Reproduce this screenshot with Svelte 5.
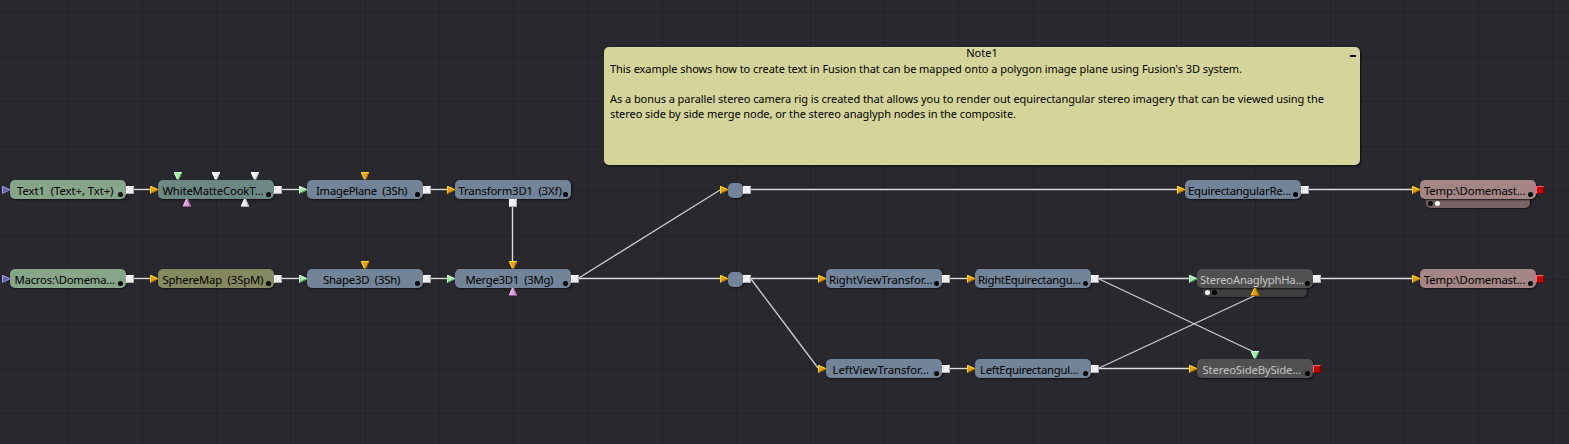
<script>
  const gridX = [68, 142, 216, 290, 365, 439, 513, 587, 662, 736, 810, 884, 958, 1033, 1107, 1181, 1255, 1330, 1404, 1478, 1552];
  const gridY = [12, 57, 101, 146, 190, 235, 279, 324, 369, 413];

  // ports: [direction, colour, x, y] measured from the node's top-left corner
  const nodes = [
    { x: 10, y: 180, tone: 'green', label: 'Text1  (Text+, Txt+)', w: 96.5, tx: 7, input: 'blue', out: 'white' },
    { x: 158, y: 180, tone: 'teal', label: 'WhiteMatteCookT...', w: 101, tx: 4.5, input: 'gold', out: 'white',
      ports: [['down', 'mint', 16, -8], ['down', 'white', 54, -8], ['down', 'white', 93, -8], ['up', 'pink', 25, 19], ['up', 'white', 83, 19]] },
    { x: 307, y: 180, tone: 'blue', label: 'ImagePlane  (3Sh)', w: 91.5, tx: 9, input: 'mint', out: 'white', ports: [['down', 'gold', 54, -8]] },
    { x: 455, y: 180, tone: 'blue', label: 'Transform3D1  (3Xf)', w: 103.5, tx: 3.5, input: 'gold' },
    { x: 10, y: 269, tone: 'green', label: 'Macros:\\Domema...', w: 100.5, tx: 4.5, input: 'blue', out: 'white' },
    { x: 158, y: 269, tone: 'olive', label: 'SphereMap  (3SpM)', w: 101, tx: 4.5, input: 'gold', out: 'white' },
    { x: 307, y: 269, tone: 'blue', label: 'Shape3D  (3Sh)', w: 77.5, tx: 16, input: 'mint', out: 'white', ports: [['down', 'gold', 54, -8]] },
    { x: 455, y: 269, tone: 'blue', label: 'Merge3D1  (3Mg)', w: 88, tx: 10.5, input: 'mint', out: 'white', ports: [['down', 'gold', 54, -8], ['up', 'pink', 54, 19]] },
    { x: 826, y: 269, tone: 'blue', label: 'RightViewTransfor...', w: 103.5, tx: 3, input: 'gold', out: 'white' },
    { x: 826, y: 359, tone: 'blue', label: 'LeftViewTransfor...', w: 96.5, tx: 6.5, input: 'gold', out: 'white' },
    { x: 975, y: 269, tone: 'blue', label: 'RightEquirectangu...', w: 103, tx: 3, input: 'gold', out: 'white' },
    { x: 975, y: 359, tone: 'blue', label: 'LeftEquirectangul...', w: 98.5, tx: 5, input: 'gold', out: 'white' },
    { x: 1185, y: 180, tone: 'blue', label: 'EquirectangularRe...', w: 103, tx: 3, input: 'gold', out: 'white' },
    { x: 1197, y: 269, tone: 'gray', label: 'StereoAnaglyphHa...', w: 104, tx: 3, input: 'mint', out: 'white', view: 'left', ports: [['up', 'gold', 54, 19]] },
    { x: 1197, y: 359, tone: 'gray', label: 'StereoSideBySide...', w: 98.5, tx: 5.5, input: 'gold', out: 'red', ports: [['down', 'mint', 54, -8]] },
    { x: 1420, y: 180, tone: 'rose', label: 'Temp:\\Domemast...', w: 101.5, tx: 4, input: 'gold', out: 'red', view: 'right' },
    { x: 1420, y: 269, tone: 'rose', label: 'Temp:\\Domemast...', w: 101.5, tx: 4, input: 'gold', out: 'red' },
    { x: 728, y: 183, tone: 'blue', dot: true, input: 'gold', out: 'white' },
    { x: 728, y: 272, tone: 'blue', dot: true, input: 'gold', out: 'white' },
  ];

  const wires = [
    [133, 189.5, 151, 189.5], [281, 189.5, 300, 189.5], [430, 189.5, 448, 189.5],
    [133, 278.5, 151, 278.5], [281, 278.5, 300, 278.5], [430, 278.5, 448, 278.5],
    [512.5, 206, 512.5, 262], [578, 278.5, 721, 278.5], [578, 278.5, 720, 190],
    [750, 189.5, 1178, 189.5], [750, 278.5, 819, 278.5], [751, 279, 818, 368],
    [949, 278.5, 968, 278.5], [949, 368.5, 968, 368.5],
    [1098, 278.5, 1190, 278.5], [1098, 278.5, 1254, 352],
    [1098, 368.5, 1190, 368.5], [1098, 368.5, 1254, 296],
    [1308, 189.5, 1413, 189.5], [1320, 278.5, 1413, 278.5],
  ];

  const colors = {
    gold: ['#e69c10', '#ffdc18', '#a86500'],
    mint: ['#a0e8a8', '#d2ffd6', '#4b9a58'],
    blue: ['#6360a8', '#a5a2ed', '#8582d0'],
    pink: ['#dd9cdd', '#f4c6f4', '#89548c'],
    white: ['#eeeeee', '#ffffff', '#aaaaaa'],
  };
</script>

{#snippet arrow(dir, color, x, y)}
  {@const c = colors[color]}
  <svg class="port" style:left="{x}px" style:top="{y}px" width="8" height="8" viewBox="0 0 8 8">
    {#if dir === 'right'}
      <path d="M0 0H1L8 3.2V4.3L1 7.5H0Z" fill={c[0]} />
      <path d="M.5 7.5V.5L7.5 3.6" fill="none" stroke={c[1]} />
      <path d="M.8 7.2L7.7 4" fill="none" stroke={c[2]} />
    {:else if dir === 'down'}
      <path d="M0 0H8V1L5 7.5H3L0 1Z" fill={c[0]} />
      <path d="M8 .5H.4L3.4 7" fill="none" stroke={c[1]} />
      <path d="M7.6 1L4.7 7.2" fill="none" stroke={c[2]} />
    {:else}
      <path d="M3 0H5L8 7V8H0V7Z" fill={c[0]} />
      <path d="M.4 7L3.5 .3" fill="none" stroke={c[1]} />
      <path d="M4.6 .3L7.5 7.5H0" fill="none" stroke={c[2]} />
    {/if}
  </svg>
{/snippet}

<main class="canvas">
  <svg class="layer" width="1569" height="444" viewBox="0 0 1569 444">
    <g fill="#222226">
      {#each gridX as x}<rect {x} y="0" width="1" height="444" />{/each}
      {#each gridY as y}<rect x="0" {y} width="1569" height="1" />{/each}
    </g>
  </svg>

  <section class="note">
    <header>Note1<span class="collapse"></span></header>
    <p><svg width="714" height="60" viewBox="0 0 714 60">
      <text x="0" y="11" textLength="632">This example shows how to create text in Fusion that can be mapped onto a polygon image plane using Fusion's 3D system.</text>
      <text x="0" y="41" textLength="714">As a bonus a parallel stereo camera rig is created that allows you to render out equirectangular stereo imagery that can be viewed using the</text>
      <text x="0" y="56" textLength="406">stereo side by side merge node, or the stereo anaglyph nodes in the composite.</text>
    </svg></p>
  </section>

  {#each nodes as n}
    <div class="node {n.tone}" class:dot={n.dot} style:left="{n.x}px" style:top="{n.y}px">
      {#if n.view}
        <div class="tray"><i class:lit={n.view === 'left'}></i><i class:lit={n.view === 'right'}></i></div>
      {/if}
      <div class="body">
        {#if n.label}
          <svg class="label" width="116" height="19" viewBox="0 0 116 19">
            <text x={n.tx} y="15" textLength={n.w}>{n.label.replaceAll('  ', '\u00a0\u00a0')}</text>
          </svg>
          <span class="state"></span>
        {/if}
      </div>
    </div>
  {/each}

  <svg class="layer" width="1569" height="444" viewBox="0 0 1569 444">
    {#each wires as [x1, y1, x2, y2]}
      <line {x1} {y1} {x2} {y2} stroke={x1 === x2 || y1 === y2 ? '#dedede' : '#cbcbcd'} stroke-width="1.35" />
    {/each}
  </svg>

  {#each nodes as n}
    {@render arrow('right', n.input, n.x - 8, n.dot ? n.y + 3 : n.y + 6)}
    {#if n.out}
      <span class="out {n.out}" style:left="{n.dot ? n.x + 15 : n.x + 116}px" style:top="{n.dot ? n.y + 3 : n.y + 6}px"></span>
    {/if}
    {#each n.ports ?? [] as [dir, color, x, y]}
      {@render arrow(dir, color, n.x + x, n.y + y)}
    {/each}
  {/each}
  <span class="out white" style:left="509px" style:top="199px"></span>
</main>

<style>
  :global(body) { background: #29282e; }
  .canvas {
    position: relative;
    width: 1569px;
    height: 444px;
    overflow: hidden;
    background: #29282e;
    font: 11.3px "Noto Sans", "Open Sans", sans-serif;
    color: #000;
  }
  .layer { position: absolute; inset: 0; }
  .note {
    position: absolute;
    left: 604px;
    top: 47px;
    width: 756px;
    height: 118px;
    box-sizing: border-box;
    border-radius: 5px;
    background: #d5d59b;
    box-shadow: 1px 1px 2px #0c0c0e;
    font-size: 11px;
  }
  header {
    position: relative;
    height: 15px;
    line-height: 12px;
    text-align: center;
  }
  .collapse {
    position: absolute;
    right: 4px;
    top: 8px;
    width: 6px;
    height: 2px;
    background: #000;
  }
  p { margin: 0; padding-left: 6px; }
  p svg { display: block; overflow: visible; }
  .node { position: absolute; width: 116px; height: 19px; }
  .body {
    position: relative;
    width: 116px;
    height: 19px;
    border-radius: 5px;
    background: var(--fill);
    box-shadow: 1px 1px 2px #101013;
  }
  .dot, .dot .body { width: 15px; height: 15px; }
  .label { position: absolute; left: 0; top: 0; overflow: visible; fill: var(--ink, #000); }
  .state {
    position: absolute;
    right: 3px;
    bottom: 2px;
    width: 5px;
    height: 5px;
    border-radius: 50%;
    background: #000;
  }
  .tray {
    position: absolute;
    left: 6px;
    top: 16px;
    width: 104px;
    height: 12px;
    box-sizing: border-box;
    padding: 5px 0 0 2px;
    display: flex;
    gap: 2px;
    border-radius: 0 0 5px 5px;
    background: var(--tray);
    box-shadow: 1px 1px 1px #151518;
  }
  .tray i { width: 5px; height: 5px; border-radius: 50%; background: #000; }
  .tray i.lit { background: #fff; }
  .green { --fill: #86a589; }
  .teal { --fill: #6b8882; }
  .olive { --fill: #85895f; }
  .blue { --fill: #718499; }
  .gray { --fill: #505050; --ink: #c4c4c4; --tray: #3f3f3f; }
  .rose { --fill: #a68585; --tray: #7b6464; }
  .port { position: absolute; }
  .out {
    position: absolute;
    width: 8px;
    height: 8px;
    box-sizing: border-box;
    border: 1px solid;
  }
  .out.white { background: #eee; border-color: #fff #aaa #aaa #fff; }
  .out.red { background: #c40000; border-color: #ff6666 #780000 #780000 #ff6666; }
</style>
